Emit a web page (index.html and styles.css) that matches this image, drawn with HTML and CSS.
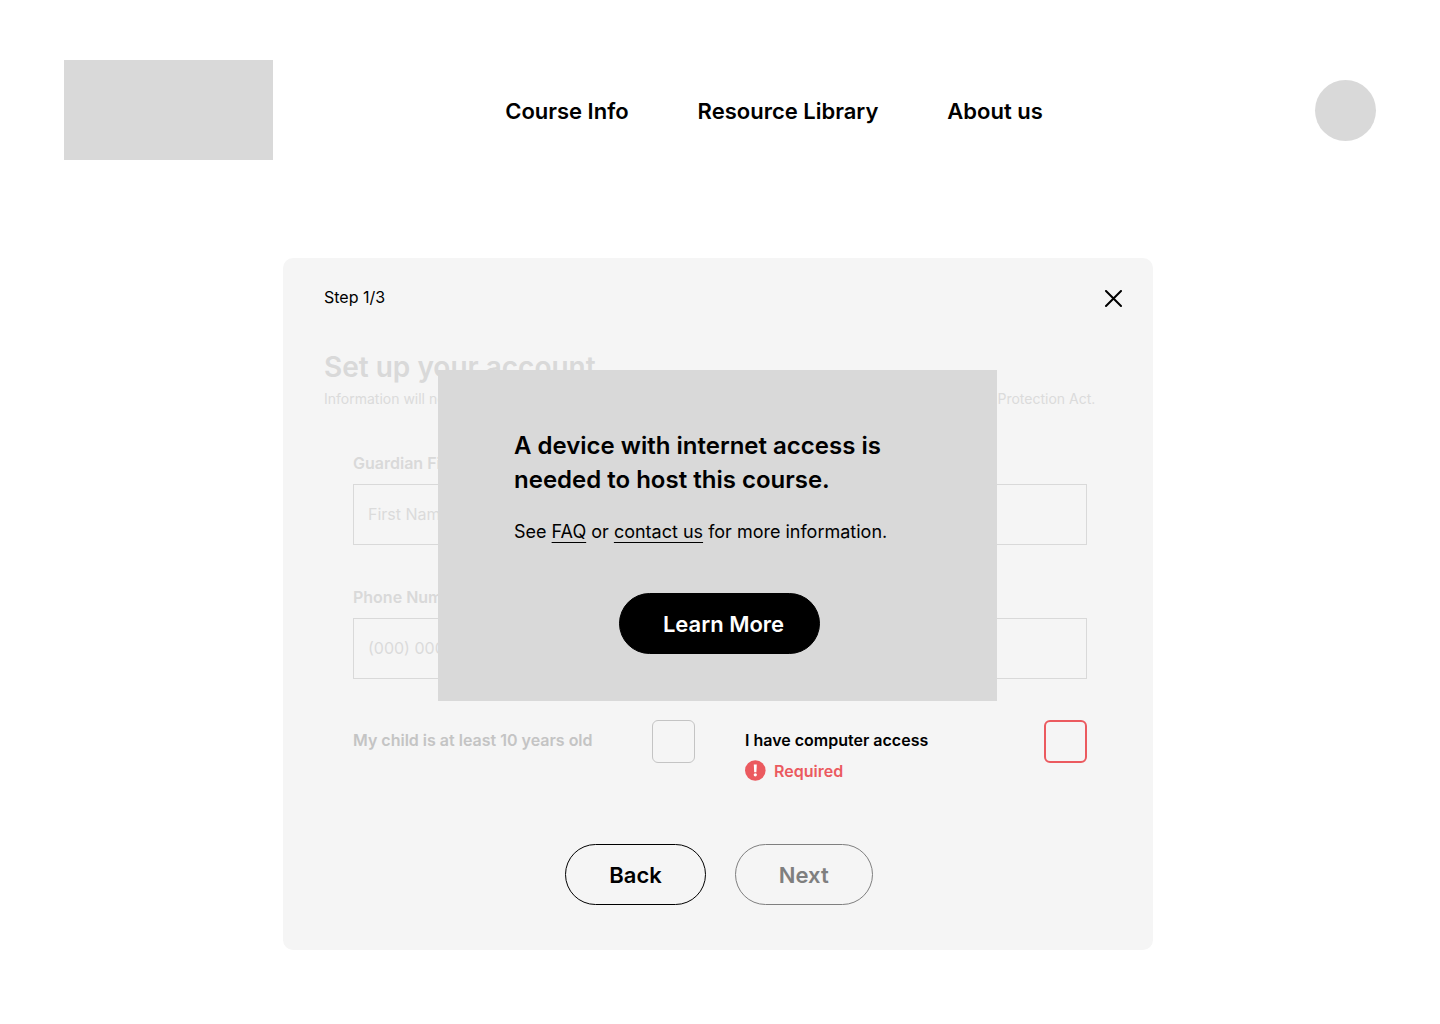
FILE: index.html
```html
<!DOCTYPE html>
<html lang="en">
<head>
  <meta charset="utf-8">
  <meta name="viewport" content="width=device-width, initial-scale=1">
  <title>Set up your account</title>
  <link rel="stylesheet" href="styles.css">
</head>
<body>
  <header class="site-header">
    <div class="logo"></div>
    <nav class="site-nav">
      <a href="#courses">Course Info</a>
      <a href="#library">Resource Library</a>
      <a href="#about">About us</a>
    </nav>
    <div class="avatar"></div>
  </header>

  <main class="page">
    <section class="card">
      <div class="card-top">
        <span>Step 1/3</span>
        <button class="close" type="button" aria-label="Close">
          <svg width="18" height="18" viewBox="0 0 18 18" fill="none" stroke="currentColor" stroke-width="2" stroke-linecap="round">
            <path d="M2 1l15 15M17 1l-15 15"/>
          </svg>
        </button>
      </div>

      <h1 class="title">Set up your account</h1>
      <p class="note">Information will not be shared with any third partners in compliance with the Children’s Online Privacy Protection Act.</p>

      <form class="form">
        <div class="field">
          <label for="first-name">Guardian First Name</label>
          <input id="first-name" type="text" placeholder="First Name">
        </div>
        <div class="field">
          <label for="phone">Phone Number</label>
          <input id="phone" type="tel" placeholder="(000) 000-0000">
        </div>
        <div class="check">
          <label for="age">My child is at least 10 years old</label>
          <input id="age" type="checkbox">
        </div>
        <div class="check check-error">
          <div class="check-text">
            <label for="computer">I have computer access</label>
            <p class="error">
              <svg width="21" height="21" viewBox="0 0 21 21" aria-hidden="true">
                <circle cx="10.3" cy="10.5" r="10.3" fill="currentColor"/>
                <path d="M8.8 4.5h3l-.4 7.7h-2.2z" fill="#fff"/>
                <circle cx="10.3" cy="14.8" r="1.6" fill="#fff"/>
              </svg>
              <span>Required</span>
            </p>
          </div>
          <input id="computer" type="checkbox">
        </div>
        <div class="actions">
          <button class="pill" type="button">Back</button>
          <button class="pill" type="submit" disabled>Next</button>
        </div>
      </form>

      <div class="modal" role="dialog" aria-labelledby="modal-title">
        <h2 id="modal-title">A device with internet access is needed to host this course.</h2>
        <p>See <a href="#faq">FAQ</a> or <a href="#contact">contact us</a> for more information.</p>
        <button class="pill pill-dark" type="button">Learn More</button>
      </div>
    </section>
  </main>
</body>
</html>
```
FILE: styles.css
```css
* {
  box-sizing: border-box;
}

body {
  margin: 0;
  background: #fff;
  color: #000;
  font-family: Inter, "Liberation Sans", sans-serif;
  font-size: 16px;
  line-height: 20px;
}

h1, h2, p {
  margin: 0;
}

button, input {
  font: inherit;
}

.site-header {
  display: flex;
  align-items: center;
  justify-content: space-between;
  padding: 60px 64px 0;
}

.logo {
  width: 209px;
  height: 100px;
  background: #d9d9d9;
}

.avatar {
  width: 61px;
  height: 61px;
  border-radius: 50%;
  background: #d9d9d9;
}

.site-nav {
  display: flex;
  gap: 69px;
  margin-right: 40px;
  padding-top: 2px;
  font-size: 22px;
  font-weight: 600;
  line-height: 28px;
}

.site-nav a {
  color: inherit;
  text-decoration: none;
}

.page {
  padding: 98px 4px 72px 0;
}

.card {
  position: relative;
  max-width: 870px;
  margin: 0 auto;
  padding: 28px 29px 45px 41px;
  border-radius: 10px;
  background: #f5f5f5;
}

.card-top {
  display: flex;
  align-items: flex-start;
  justify-content: space-between;
  line-height: 22px;
}

.close {
  display: flex;
  padding: 4px 2px 2px;
  border: 0;
  background: none;
  color: #000;
}

.title {
  margin-top: 39px;
  color: #d9d9d9;
  font-size: 28px;
  font-weight: 600;
  line-height: 36px;
}

.note {
  margin-top: 4px;
  color: #dbdbdb;
  font-size: 14px;
}

.form {
  display: grid;
  grid-template-columns: 1fr 1fr;
  gap: 41px 50px;
  padding: 43px 37px 0 29px;
}

.field {
  grid-column: 1 / -1;
  display: flex;
  flex-direction: column;
  gap: 10px;
  color: #d9d9d9;
  font-weight: 600;
  line-height: 22px;
}

.field input {
  width: 100%;
  height: 61px;
  padding: 0 14px 2px;
  border: 1px solid #d9d9d9;
  border-radius: 0;
  background: none;
  font-weight: 400;
}

.field input::placeholder {
  color: #dbdbdb;
  opacity: 1;
}

.check {
  display: flex;
  align-items: flex-start;
  justify-content: space-between;
  color: #c4c4c4;
  font-weight: 600;
}

.check > label,
.check-text {
  padding-top: 10px;
}

.check input {
  appearance: none;
  width: 43px;
  height: 43px;
  margin: 0;
  border: 1px solid #c4c4c4;
  border-radius: 6px;
}

.check-error {
  color: #000;
}

.check-error input {
  border: 2px solid #eb5a5f;
}

.error {
  display: flex;
  align-items: center;
  gap: 8px;
  margin-top: 10px;
  color: #eb5a5f;
}

.actions {
  grid-column: 1 / -1;
  display: flex;
  justify-content: center;
  gap: 29px;
  padding: 22px 2px 0 0;
}

.pill {
  height: 61px;
  padding: 0 43px;
  border: 1px solid #000;
  border-radius: 31px;
  background: none;
  color: #000;
  font-size: 22px;
  font-weight: 600;
  line-height: 28px;
}

.pill:disabled {
  border-color: #7f7f7f;
  color: #7f7f7f;
}

.pill-dark {
  padding: 0 35px 0 43px;
  background: #000;
  color: #fff;
}

/* Notice shown over the form */
.modal {
  position: absolute;
  top: 112px;
  left: 155px;
  right: 156px;
  padding: 59px 72px 47px 76px;
  background: #d9d9d9;
}

.modal h2 {
  font-size: 24px;
  font-weight: 600;
  line-height: 34px;
}

.modal p {
  margin-top: 23px;
  font-size: 18px;
  line-height: 24px;
}

.modal a {
  color: inherit;
  text-decoration-thickness: 1px;
  text-underline-offset: 4px;
}

.modal .pill {
  display: block;
  margin: 49px auto 0;
}
```
